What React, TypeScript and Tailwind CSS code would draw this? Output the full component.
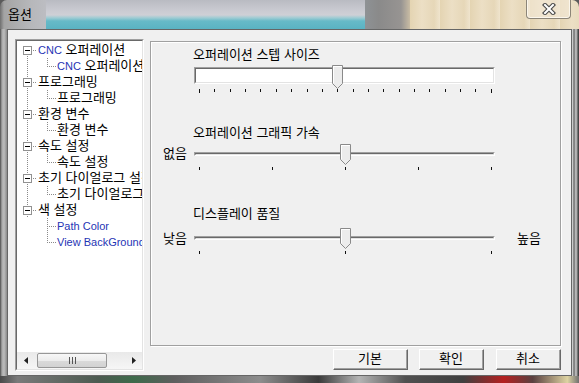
import type { ReactNode } from 'react'

const FONT = "font-['Liberation_Sans','Noto_Sans_CJK_KR',sans-serif]"

const TREE: { label: string; children: string[] }[] = [
  { label: 'CNC 오퍼레이션', children: ['CNC 오퍼레이션'] },
  { label: '프로그래밍', children: ['프로그래밍'] },
  { label: '환경 변수', children: ['환경 변수'] },
  { label: '속도 설정', children: ['속도 설정'] },
  { label: '초기 다이얼로그 설정', children: ['초기 다이얼로그 설정'] },
  { label: '색 설정', children: ['Path Color', 'View BackGround'] },
]

// 1px dotted connector lines, one dot every other pixel
function hdots(k: string, x1: number, x2: number, y: number) {
  const out: ReactNode[] = []
  for (let x = x1; x <= x2; x += 2) out.push(<rect key={`${k}${x}`} x={x} y={y} width={1} height={1} />)
  return out
}

function vdots(k: string, x: number, y1: number, y2: number) {
  const out: ReactNode[] = []
  for (let y = y1; y <= y2; y += 2) out.push(<rect key={`${k}${y}`} x={x} y={y} width={1} height={1} />)
  return out
}

function Label({ text }: { text: string }) {
  const parts = text.split(/([A-Za-z][A-Za-z ]*[A-Za-z])/)
  return (
    <>
      {parts.map((p, i) =>
        /[A-Za-z]/.test(p) ? (
          <span key={i} className="text-[11px] text-[#1f35b5]">{p}</span>
        ) : (
          <span key={i}>{p}</span>
        )
      )}
    </>
  )
}

function Scrollbar() {
  return (
    <div className="flex h-[17px] shrink-0 bg-[linear-gradient(to_bottom,#e9e9e9,#f6f6f6)]">
      <div className="flex w-[17px] items-center justify-center">
        <svg width="4" height="7"><polygon points="4,0 4,7 0,3.5" fill="#222" /></svg>
      </div>
      <div className="flex flex-1 items-center">
        <div className="ml-[3px] flex h-[15px] w-[70px] items-center justify-center gap-[2px] rounded-[2px] border border-[#979797] bg-[linear-gradient(to_bottom,#f7f7f7,#ececec_50%,#dadada_51%,#d2d2d2)]">
          <span className="h-[7px] w-px bg-[#555]" />
          <span className="h-[7px] w-px bg-[#555]" />
          <span className="h-[7px] w-px bg-[#555]" />
        </div>
      </div>
      <div className="flex w-[17px] items-center justify-center">
        <svg width="4" height="7"><polygon points="0,0 0,7 4,3.5" fill="#222" /></svg>
      </div>
    </div>
  )
}

function Tree() {
  return (
    <div className="ml-[7px] mt-[9px] h-[332px] w-[129px] shrink-0 border border-t-[#a0a0a0] border-l-[#a0a0a0] border-b-white border-r-white">
      <div className="flex h-full flex-col border border-t-[#696969] border-l-[#696969] border-b-[#e3e3e3] border-r-[#e3e3e3] bg-white">
        <div className="flex-1 overflow-hidden whitespace-nowrap pt-px text-black">
          {TREE.map((node, i) => {
            const first = i === 0
            const last = i === TREE.length - 1
            return (
              <div key={i}>
                <div className="flex h-4 items-center">
                  <svg width={21} height={16} className="shrink-0" fill="#8a8a8a" shapeRendering="crispEdges">
                    {!first && vdots('a', 10, 0, 2)}
                    {vdots('b', 10, 14, 14)}
                    <rect x={6.5} y={4.5} width={8} height={8} fill="#fff" stroke="#919191" />
                    <rect x={8} y={8} width={5} height={1} fill="#000" />
                    {hdots('c', 16, 18, 8)}
                  </svg>
                  <span><Label text={node.label} /></span>
                </div>
                {node.children.map((c, j) => {
                  const lastChild = j === node.children.length - 1
                  return (
                    <div key={j} className="flex h-4 items-center">
                      <svg width={40} height={16} className="shrink-0" fill="#8a8a8a" shapeRendering="crispEdges">
                        {!last && vdots('a', 10, 0, 14)}
                        {vdots('b', 30, 0, lastChild ? 8 : 14)}
                        {hdots('c', 32, 38, 8)}
                      </svg>
                      <span><Label text={c} /></span>
                    </div>
                  )
                })}
              </div>
            )
          })}
        </div>
        <Scrollbar />
      </div>
    </div>
  )
}

function Thumb({ wide, left }: { wide?: boolean; left: number }) {
  const h = wide ? 24 : 21
  const body = wide ? 18 : 15
  return (
    <svg width={11} height={h} className="absolute top-0" style={{ left }} shapeRendering="crispEdges">
      <polygon
        points={`0.5,0.5 10.5,0.5 10.5,${body + 0.5} 5.5,${h - 0.5} 0.5,${body + 0.5}`}
        fill="#ececec"
        stroke="#8a8a8a"
        shapeRendering="auto"
      />
      <polyline points={`1.5,${body} 1.5,1.5 9.5,1.5`} fill="none" stroke="#fff" />
    </svg>
  )
}

function Slider({ ticks, value, wide }: { ticks: number; value: number; wide?: boolean }) {
  const step = 292 / (ticks - 1)
  return (
    <div className="relative w-[301px] shrink-0">
      {wide ? (
        <div className="mt-[2px] h-[17px] border border-t-[#a0a0a0] border-l-[#a0a0a0] border-b-white border-r-white">
          <div className="h-full border border-t-[#696969] border-l-[#696969] border-b-[#e3e3e3] border-r-[#e3e3e3] bg-white" />
        </div>
      ) : (
        <div className="mt-[8px] h-[4px] border border-t-[#a0a0a0] border-l-[#a0a0a0] border-b-white border-r-white">
          <div className="h-full border border-t-[#696969] border-l-[#696969] border-b-[#e3e3e3] border-r-[#e3e3e3]" />
        </div>
      )}
      <div className={`flex items-start justify-between pl-[5px] pr-[3px] ${wide ? 'mt-[5px]' : 'mt-[11px]'}`}>
        {Array.from({ length: ticks }).map((_, i) => (
          <span
            key={i}
            className={`w-px bg-[#111] ${wide && (i === 0 || i === ticks - 1) ? 'h-[4px]' : 'h-[3px]'}`}
          />
        ))}
      </div>
      <Thumb wide={wide} left={Math.round(value * step)} />
    </div>
  )
}

function Button({ label, width }: { label: string; width: string }) {
  return (
    <button className={`${width} h-[21px] border border-t-white border-l-white border-b-[#696969] border-r-[#696969] bg-[#f0f0f0] p-0`}>
      <div className="flex h-full items-center justify-center border-b border-r border-[#a0a0a0] leading-4">{label}</div>
    </button>
  )
}

function Panel() {
  return (
    <section className="flex h-[305px] w-[411px] flex-col border border-[#a0a0a0] shadow-[inset_1px_1px_0_#fff,1px_1px_0_#fff]">
      <p className="mt-[5px] pl-[42px] leading-4">오퍼레이션 스텝 사이즈</p>
      <div className="mt-[2px] flex pl-[43px]">
        <Slider wide ticks={20} value={9} />
      </div>

      <p className="mt-[32px] pl-[42px] leading-4">오퍼레이션 그래픽 가속</p>
      <div className="mt-[3px] flex items-start">
        <span className="mt-[2px] w-[43px] shrink-0 pl-[12px] leading-4">없음</span>
        <Slider ticks={5} value={2} />
      </div>

      <p className="mt-[36px] pl-[42px] leading-4">디스플레이 품질</p>
      <div className="mt-[6px] flex items-start">
        <span className="mt-[3px] w-[43px] shrink-0 pl-[12px] leading-4">낮음</span>
        <Slider ticks={3} value={1} />
        <span className="ml-[22px] mt-[3px] leading-4">높음</span>
      </div>
    </section>
  )
}

export default function App() {
  return (
    <div className={`h-[383px] w-[579px] overflow-hidden bg-[#5a5a5a] text-[13px] text-black ${FONT}`}>
      <div className="flex h-full flex-col overflow-hidden rounded-t-[7px]">
        {/* title bar over the blurred glass */}
        <div className="flex h-[29px] shrink-0">
          <div className="w-[46px] bg-[linear-gradient(to_right,#6f6f6f,#a4a4a4_4px,#b6b7ba_30px,#bcbdc2)] pl-[8px] pt-[7px] leading-4">
            옵션
          </div>
          <div className="w-[319px] bg-[linear-gradient(to_bottom,#b9bbc2,#c9cad1_10px,#cfd0d6_15px,#9ccbd3_18px,#67bac8_21px,#5ab3c3_29px)]" />
          <div className="w-[45px] bg-[linear-gradient(to_right,#8e9295,#8a8a8a_30%,#979492_80%,#c9bca4)]" />
          <div className="flex flex-1 justify-end bg-[repeating-linear-gradient(90deg,#e4d4b2_0px,#ecdfc5_12px,#e6d7b8_24px,#efe4cd_30px)] pr-[8px]">
            <div className="flex h-[19px] w-[45px] items-center justify-center rounded-b-[4px] border border-t-0 border-[#8c8578] bg-[#f3ead8]/60 shadow-[inset_0_-1px_0_#fbf6ec,inset_1px_0_0_#fbf6ec,inset_-1px_0_0_#fbf6ec]">
              <svg width="14" height="12" viewBox="0 0 14 12">
                <path d="M3 2 L11 10 M11 2 L3 10" stroke="#4a4a4a" strokeWidth="4.2" strokeLinecap="square" />
                <path d="M3 2 L11 10 M11 2 L3 10" stroke="#fff" strokeWidth="2" strokeLinecap="square" />
              </svg>
            </div>
          </div>
        </div>

        <div className="flex flex-1">
          <div className="w-[7px] bg-[linear-gradient(to_right,#4c4c4c,#a9a9a9_2px,#bdbdbd_4px,#8a8a8a_7px)]" />
          <div className="flex flex-1 items-start border border-[#666] bg-[#f0f0f0]">
            <Tree />
            <div className="ml-[6px] mt-[11px] flex w-[411px] flex-col">
              <Panel />
              <div className="mt-[3px] flex justify-end">
                <Button label="기본" width="w-[75px]" />
                <div className="w-[11px]" />
                <Button label="확인" width="w-[65px]" />
                <div className="w-[12px]" />
                <Button label="취소" width="w-[65px]" />
              </div>
            </div>
          </div>
          <div className="w-[7px] bg-[linear-gradient(to_right,#ececec,#6a6a6a_2px,#cfcfcf_4px,#8c8c8c_5px,#2e2e2e_7px)]" />
        </div>

        <div className="h-[7px] shrink-0 bg-[linear-gradient(to_right,#4a4a4a,#7a7a7a_3%,#4c5a50_17%,#3d6a4a_23%,#5e5e5e_30%,#8d8d8d_45%,#3a3a3a_55%,#b4b4b4_62%,#505050_70%,#404040_80%,#b52020_87%,#5a4040_92%,#ddd3a2_98%,#707070)]" />
      </div>
    </div>
  )
}
